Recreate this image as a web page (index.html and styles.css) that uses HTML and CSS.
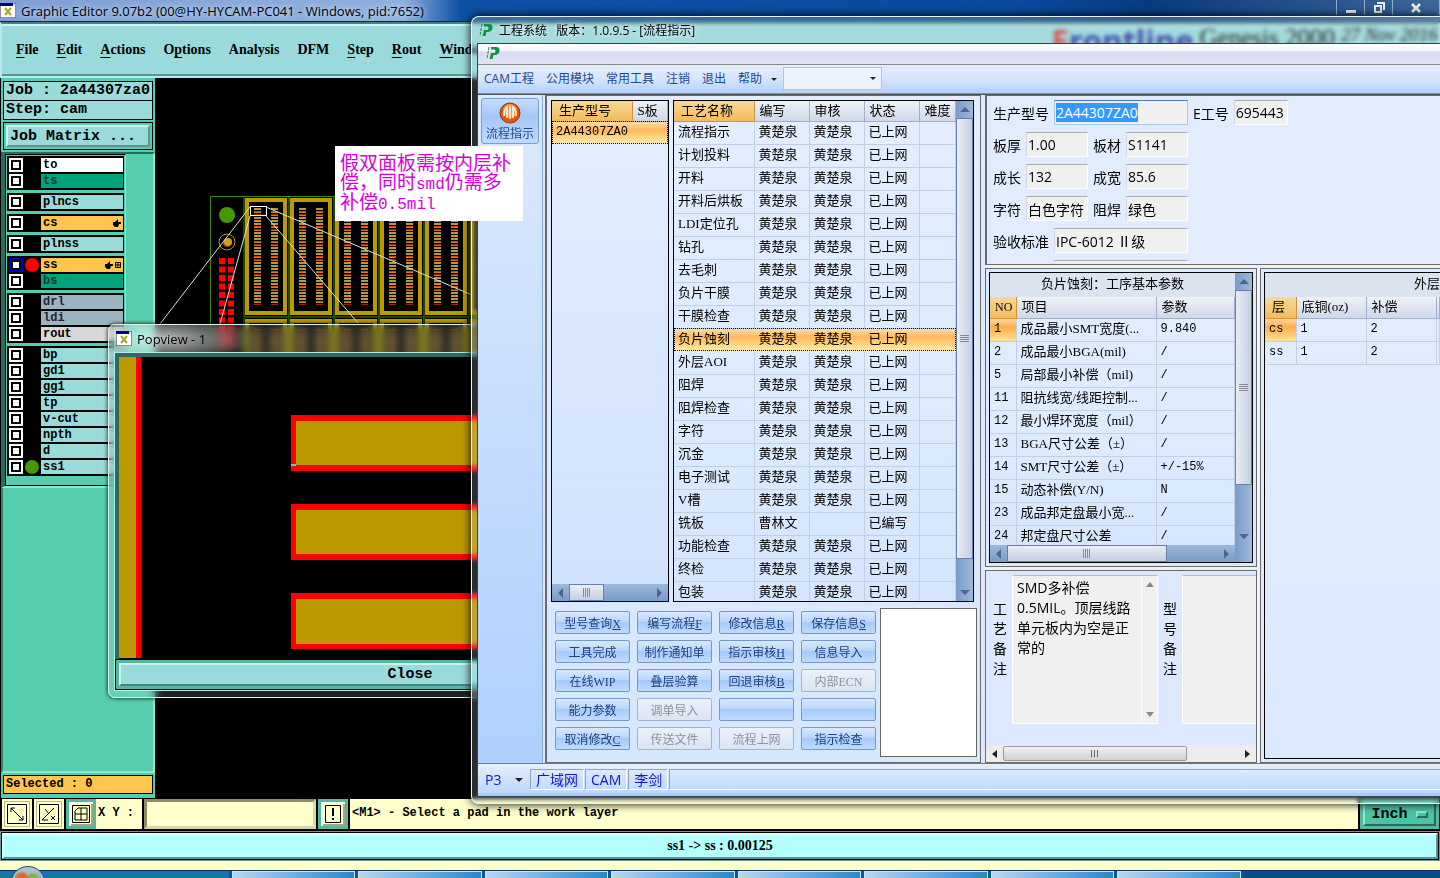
FILE: index.html
```html
<!DOCTYPE html>
<html lang="zh-CN">
<head>
    <meta charset="UTF-8">
    <meta name="viewport" content="width=device-width, initial-scale=1.0">
    <title>工程系统</title>
    <link rel="stylesheet" href="styles.css">
</head>
<body>
    <svg width="0" height="0" class="defs">
        <symbol id="xlogo" viewBox="0 0 16 15">
            <rect x="0" y="0" width="16" height="15" fill="#ddd" stroke="#444"/>
            <rect x="0" y="0" width="13" height="3" fill="#000080"/>
            <rect x="1" y="3" width="14" height="11" fill="#fff"/>
            <path d="M5 5l6 7M11 5l-6 7" stroke="#a8a820" stroke-width="2"/>
        </symbol>
        <symbol id="plogo" viewBox="0 0 14 14">
            <path d="M3 1l-2 12" stroke="#1a8a45" stroke-width="1" stroke-dasharray="3 1"/>
            <path d="M5 1h5q4 0 3.500 4q-.5 4-5 4h-1l-1 4h-3l1.500-6h3q1.500 0 1.500-2t-1.500-1.500h-3z" fill="#0f9246"/>
        </symbol>
    </svg>

    <div class="editor">
        <header class="editor-title">
            <svg width="16" height="15"><use href="#xlogo"/></svg>
            <span>Graphic Editor 9.07b2 (00@HY-HYCAM-PC041 - Windows, pid:7652)</span>
            <div class="win-buttons">
                <button aria-label="minimize"><svg width="12" height="12"><path d="M1 8h10v3h-10z" fill="#eee"/></svg></button>
                <button aria-label="restore"><svg width="12" height="12" fill="none" stroke="#eee" stroke-width="2"><path d="M4 1h7v7"/><rect x="2" y="4" width="6" height="6"/></svg></button>
                <button aria-label="close" class="wide"><svg width="12" height="12" stroke="#eee" stroke-width="2.500"><path d="M2 2l8 8M10 2l-8 8"/></svg></button>
            </div>
        </header>

        <nav class="editor-menu">
            <a href="#"><u>F</u>ile</a>
            <a href="#"><u>E</u>dit</a>
            <a href="#"><u>A</u>ctions</a>
            <a href="#">O<u>p</u>tions</a>
            <a href="#">Analysis</a>
            <a href="#">DFM</a>
            <a href="#"><u>S</u>tep</a>
            <a href="#"><u>R</u>out</a>
            <a href="#"><u>W</u>indows</a>
            <div class="brand">
                <b class="brand-name"><i>F</i>rontline</b>
                <span class="brand-product">Genesis 2000</span>
                <em>27 Nov 2016</em>
            </div>
        </nav>

        <main class="editor-main">
            <aside class="side">
                <div class="job">
                    <div class="field">Job : 2a44307za0</div>
                    <div class="field">Step: cam</div>
                </div>
                <div class="matrix"><button>Job Matrix ...</button></div>
                <div class="layers">
                    <div class="layer-list">
                        <div class="group">
                            <label class="layer"><input type="checkbox"><i></i><span class="white">to</span></label>
                            <label class="layer"><input type="checkbox"><i></i><span class="green">ts</span></label>
                        </div>
                        <div class="group">
                            <label class="layer"><input type="checkbox"><i></i><span>plncs</span></label>
                        </div>
                        <div class="group">
                            <label class="layer"><input type="checkbox"><i></i><span class="orange">cs<svg width="8" height="8"><path d="M0 3h2l3-3v3h3v2h-2l-1 3h-3l-2-2z"/></svg></span></label>
                        </div>
                        <div class="group">
                            <label class="layer"><input type="checkbox"><i></i><span>plnss</span></label>
                        </div>
                        <div class="group">
                            <label class="layer"><input type="checkbox" class="work"><i class="red"></i><span class="orange">ss<svg width="16" height="8"><path d="M0 3h2l3-3v3h3v2h-2l-1 3h-3l-2-2z"/><path d="M10.500 1.500h5v5h-5zM13 1v6M10 4h6" fill="none" stroke="#000"/></svg></span></label>
                            <label class="layer"><input type="checkbox"><i></i><span class="green">bs</span></label>
                        </div>
                        <div class="group">
                            <label class="layer"><input type="checkbox"><i></i><span class="slate">drl</span></label>
                            <label class="layer"><input type="checkbox"><i></i><span class="slate">ldi</span></label>
                            <label class="layer"><input type="checkbox"><i></i><span class="grey">rout</span></label>
                        </div>
                        <div class="group">
                            <label class="layer"><input type="checkbox"><i></i><span>bp</span></label>
                            <label class="layer"><input type="checkbox"><i></i><span>gd1</span></label>
                            <label class="layer"><input type="checkbox"><i></i><span>gg1</span></label>
                            <label class="layer"><input type="checkbox"><i></i><span>tp</span></label>
                            <label class="layer"><input type="checkbox"><i></i><span>v-cut</span></label>
                            <label class="layer"><input type="checkbox"><i></i><span>npth</span></label>
                            <label class="layer"><input type="checkbox"><i></i><span>d</span></label>
                            <label class="layer"><input type="checkbox"><i class="lime"></i><span>ss1</span></label>
                        </div>
                    </div>
                </div>
                <div class="side-fill"></div>
                <div class="selected"><div>Selected : 0</div></div>
            </aside>
            <div class="board">
                <svg width="900" height="400" viewBox="155 78 900 400">
                    <defs>
                        <pattern id="pads" patternUnits="userSpaceOnUse" x="0" y="208" width="8" height="15">
                            <rect width="8" height="2" fill="#b59a3c"/>
                            <rect y="3" width="8" height="1" fill="#e23a10"/>
                            <rect y="4" width="8" height="1" fill="#c08a20"/>
                            <rect y="6" width="8" height="1" fill="#a01c10"/>
                            <rect y="7" width="8" height="1" fill="#d8701c"/>
                            <rect y="9" width="8" height="2" fill="#b59a3c"/>
                            <rect y="12" width="8" height="2" fill="#b59a3c"/>
                        </pattern>
                        <g id="cell">
                            <path d="M244 197v120h45" fill="none" stroke="#3f8a00"/>
                            <rect x="247" y="200" width="38" height="113" fill="none" stroke="#bb9900" stroke-width="4"/>
                            <path d="M254 208h7v97h-7zM271 208h7v97h-7z" fill="url(#pads)"/>
                        </g>
                        <g id="cells">
                            <use href="#cell"/>
                            <use href="#cell" x="45"/>
                            <use href="#cell" x="90"/>
                            <use href="#cell" x="135"/>
                            <use href="#cell" x="180"/>
                            <use href="#cell" x="225"/>
                        </g>
                    </defs>
                    <path d="M210.500 440V196.500H520" fill="none" stroke="#3f8a00"/>
                    <use href="#cells"/>
                    <use href="#cells" y="121"/>
                    <circle cx="227" cy="215" r="8" fill="#449900"/>
                    <circle cx="227" cy="242" r="8" fill="none" stroke="#bb9900"/>
                    <circle cx="227" cy="243" r="4" fill="#a03010"/>
                    <circle cx="228" cy="242" r="4" fill="#d8a010"/>
                    <path d="M222 258v90M231 258v90" stroke="#f00" stroke-width="6" stroke-dasharray="6 2.500"/>
                    <rect x="250.500" y="206.500" width="16" height="9" fill="none" stroke="#fff"/>
                    <path d="M250 207L160 324M250 216L220 324M266 216L358 323M266 207L472 295" stroke="#ddd" fill="none"/>
                </svg>
            </div>
        </main>

        <div class="command">
            <button class="tool" aria-label="zoom"><svg width="20" height="20" fill="none" stroke="#000"><path d="M.5.5h19v19h-19zM4 4l12 12M4 8v-4h4M16 12v4h-4"/></svg></button>
            <button class="tool" aria-label="angle"><svg width="20" height="20" fill="none" stroke="#000"><path d="M.5.5h19v19h-19zM3 16L15 4M3 16h6M6 5l4 5M12 12l4 4M16 12l-4 4"/></svg></button>
            <button class="tool on" aria-label="grid"><svg width="18" height="18" fill="none" stroke="#000"><path d="M.5.5h17v17h-17zM3 6l3-3h9v12h-12zM3 9h12M9 3v12"/></svg></button>
            <label for="xy">X Y :</label>
            <input id="xy" type="text">
            <button class="tool on" aria-label="alert"><svg width="16" height="18" fill="none" stroke="#000"><path d="M.5.5h15v17h-15z"/><path d="M8 3v8M8 13v2" stroke-width="2"/></svg></button>
            <p>&lt;M1&gt; - Select a pad in the work layer</p>
            <div class="unit"><button>Inch <span></span></button></div>
        </div>
        <div class="message"><p>ss1 -&gt; ss : 0.00125</p></div>
        <div class="gap"></div>
        <footer class="taskbar">
            <div class="start"></div>
            <span></span><span></span><span></span><span></span><span></span><span></span><span></span><span></span><span class="last"></span>
        </footer>
    </div>

    <section class="popview">
        <h2><svg width="16" height="15"><use href="#xlogo"/></svg>Popview - 1</h2>
        <div class="pop-body">
            <div class="pop-canvas">
                <svg width="600" height="301" viewBox="119 357 600 301">
                    <path d="M119 357h17v301h-17z" fill="#bb9900"/>
                    <path d="M136 357h5v301h-5z" fill="#f00"/>
                    <path d="M291 415h400v56h-400zM291 504h400v56h-400zM291 593h400v56h-400z" fill="#f00"/>
                    <path d="M296 421h390v44h-390zM296 510h390v44h-390zM296 599h390v45h-390z" fill="#bb9900"/>
                    <path d="M291 464h5v2h-5z" fill="#4cd0d8"/>
                </svg>
            </div>
            <div class="pop-foot"><button>Close</button></div>
        </div>
    </section>

    <section class="app">
        <header class="app-title">
            <svg width="14" height="14"><use href="#plogo"/></svg>
            <h1>工程系统&nbsp;&nbsp; 版本：1.0.9.5 - [流程指示]</h1>
        </header>
        <div class="app-body">
            <div class="mdi"><svg width="14" height="14"><use href="#plogo"/></svg></div>
            <nav class="app-menu">
                <a href="#">CAM工程</a>
                <a href="#">公用模块</a>
                <a href="#">常用工具</a>
                <a href="#">注销</a>
                <a href="#">退出</a>
                <a href="#">帮助<i class="caret"></i></a>
                <div class="combo"><select aria-label="模块"><option></option></select><i class="caret"></i></div>
            </nav>

            <div class="work-area">
                <aside class="app-side">
                    <button>
                        <svg width="22" height="22">
                            <circle cx="11" cy="11" r="10" fill="#e8590c" stroke="#8d3208"/>
                            <circle cx="11" cy="9" r="7" fill="#f79a4a"/>
                            <path d="M5 14q0-7 3-9v11M11 4v13M14 16V5q3 2 3 9" fill="none" stroke="#fff" stroke-width="1.500"/>
                        </svg>
                        流程指示
                    </button>
                </aside>

                <div class="left-pane">
                    <div class="grids">
                        <div class="grid models">
                            <table>
                                <thead><tr><th class="key">生产型号</th><th>S板</th></tr></thead>
                                <tbody><tr class="current"><td colspan="2" class="lat">2A44307ZA0</td></tr></tbody>
                            </table>
                            <div class="hbar"><i class="left"></i><b></b><span></span><i class="right"></i></div>
                        </div>
                        <div class="grid process">
                            <div class="rows">
                                <table>
                                    <colgroup><col class="c80"><col class="c55"><col class="c55"><col class="c55"><col></colgroup>
                                    <thead><tr><th class="key">工艺名称</th><th>编写</th><th>审核</th><th>状态</th><th>难度</th></tr></thead>
                                    <tbody>
                                        <tr><td>流程指示</td><td>黄楚泉</td><td>黄楚泉</td><td>已上网</td><td></td></tr>
                                        <tr><td>计划投料</td><td>黄楚泉</td><td>黄楚泉</td><td>已上网</td><td></td></tr>
                                        <tr><td>开料</td><td>黄楚泉</td><td>黄楚泉</td><td>已上网</td><td></td></tr>
                                        <tr><td>开料后烘板</td><td>黄楚泉</td><td>黄楚泉</td><td>已上网</td><td></td></tr>
                                        <tr><td>LDI定位孔</td><td>黄楚泉</td><td>黄楚泉</td><td>已上网</td><td></td></tr>
                                        <tr><td>钻孔</td><td>黄楚泉</td><td>黄楚泉</td><td>已上网</td><td></td></tr>
                                        <tr><td>去毛刺</td><td>黄楚泉</td><td>黄楚泉</td><td>已上网</td><td></td></tr>
                                        <tr><td>负片干膜</td><td>黄楚泉</td><td>黄楚泉</td><td>已上网</td><td></td></tr>
                                        <tr><td>干膜检查</td><td>黄楚泉</td><td>黄楚泉</td><td>已上网</td><td></td></tr>
                                        <tr class="current"><td>负片蚀刻</td><td>黄楚泉</td><td>黄楚泉</td><td>已上网</td><td></td></tr>
                                        <tr><td>外层AOI</td><td>黄楚泉</td><td>黄楚泉</td><td>已上网</td><td></td></tr>
                                        <tr><td>阻焊</td><td>黄楚泉</td><td>黄楚泉</td><td>已上网</td><td></td></tr>
                                        <tr><td>阻焊检查</td><td>黄楚泉</td><td>黄楚泉</td><td>已上网</td><td></td></tr>
                                        <tr><td>字符</td><td>黄楚泉</td><td>黄楚泉</td><td>已上网</td><td></td></tr>
                                        <tr><td>沉金</td><td>黄楚泉</td><td>黄楚泉</td><td>已上网</td><td></td></tr>
                                        <tr><td>电子测试</td><td>黄楚泉</td><td>黄楚泉</td><td>已上网</td><td></td></tr>
                                        <tr><td>V槽</td><td>黄楚泉</td><td>黄楚泉</td><td>已上网</td><td></td></tr>
                                        <tr><td>铣板</td><td>曹林文</td><td></td><td>已编写</td><td></td></tr>
                                        <tr><td>功能检查</td><td>黄楚泉</td><td>黄楚泉</td><td>已上网</td><td></td></tr>
                                        <tr><td>终检</td><td>黄楚泉</td><td>黄楚泉</td><td>已上网</td><td></td></tr>
                                        <tr><td>包装</td><td>黄楚泉</td><td>黄楚泉</td><td>已上网</td><td></td></tr>
                                    </tbody>
                                </table>
                            </div>
                            <div class="vbar"><i class="up"></i><b></b><span></span><i class="down"></i></div>
                        </div>
                    </div>
                    <div class="actions">
                        <div class="action-grid">
                            <button>型号查询<u>X</u></button>
                            <button>编写流程<u>F</u></button>
                            <button>修改信息<u>R</u></button>
                            <button>保存信息<u>S</u></button>
                            <button>工具完成</button>
                            <button>制作通知单</button>
                            <button>指示审核<u>H</u></button>
                            <button>信息导入</button>
                            <button>在线WIP</button>
                            <button>叠层验算</button>
                            <button>回退审核<u>B</u></button>
                            <button disabled>内部ECN</button>
                            <button>能力参数</button>
                            <button disabled>调单导入</button>
                            <button aria-label="备用1"></button>
                            <button aria-label="备用2"></button>
                            <button>取消修改<u>C</u></button>
                            <button disabled>传送文件</button>
                            <button disabled>流程上网</button>
                            <button>指示检查</button>
                        </div>
                        <div class="preview"></div>
                    </div>
                </div>

                <div class="right-pane">
                    <form class="info">
                        <div class="line">
                            <label for="model">生产型号</label><input id="model" class="w134" value="2A44307ZA0">
                            <label for="worker">E工号</label><input id="worker" class="w54" value="695443">
                        </div>
                        <div class="line">
                            <label for="thick">板厚</label><input id="thick" value="1.00">
                            <label for="mat">板材</label><input id="mat" value="S1141">
                        </div>
                        <div class="line">
                            <label for="len">成长</label><input id="len" value="132">
                            <label for="wid">成宽</label><input id="wid" value="85.6">
                        </div>
                        <div class="line">
                            <label for="chars">字符</label><input id="chars" value="白色字符">
                            <label for="mask">阻焊</label><input id="mask" value="绿色">
                        </div>
                        <div class="line">
                            <label for="std">验收标准</label><input id="std" class="w134" value="IPC-6012 Ⅱ级">
                        </div>
                        <div class="line last"><input class="w134" aria-label="备注"></div>
                    </form>

                    <div class="details">
                        <div class="detail-left">
                            <div class="box params">
                                <div class="grid">
                                    <div class="param-view">
                                        <div class="param-main">
                                            <div class="rows">
                                                <table>
                                                    <caption>负片蚀刻：工序基本参数</caption>
                                                    <colgroup><col class="c26"><col class="c140"><col></colgroup>
                                                    <thead><tr><th class="key no">NO</th><th>项目</th><th>参数</th></tr></thead>
                                                    <tbody>
                                                        <tr><td class="lat hot">1</td><td>成品最小SMT宽度(...</td><td class="lat">9.840</td></tr>
                                                        <tr><td class="lat">2</td><td>成品最小BGA(mil)</td><td class="lat">/</td></tr>
                                                        <tr><td class="lat">5</td><td>局部最小补偿（mil)</td><td class="lat">/</td></tr>
                                                        <tr><td class="lat">11</td><td>阻抗线宽/线距控制...</td><td class="lat">/</td></tr>
                                                        <tr><td class="lat">12</td><td>最小焊环宽度（mil）</td><td class="lat">/</td></tr>
                                                        <tr><td class="lat">13</td><td>BGA尺寸公差（±）</td><td class="lat">/</td></tr>
                                                        <tr><td class="lat">14</td><td>SMT尺寸公差（±）</td><td class="lat">+/-15%</td></tr>
                                                        <tr><td class="lat">15</td><td>动态补偿(Y/N)</td><td class="lat">N</td></tr>
                                                        <tr><td class="lat">23</td><td>成品邦定盘最小宽...</td><td class="lat">/</td></tr>
                                                        <tr><td class="lat">24</td><td>邦定盘尺寸公差</td><td class="lat">/</td></tr>
                                                    </tbody>
                                                </table>
                                            </div>
                                            <div class="hbar"><i class="left"></i><b></b><span></span><i class="right"></i></div>
                                        </div>
                                        <div class="vbar"><i class="up"></i><b></b><span></span><i class="down"></i><em></em></div>
                                    </div>
                                </div>
                            </div>
                            <div class="box notes">
                                <div class="notes-main">
                                    <label for="n1">工艺备注</label>
                                    <div class="memo"><textarea id="n1">SMD多补偿0.5MIL。顶层线路单元板内为空是正常的</textarea><div class="memo-bar"><i class="up"></i><i class="down"></i></div></div>
                                    <label for="n2">型号备注</label>
                                    <div class="memo"><textarea id="n2"></textarea></div>
                                </div>
                                <div class="sysbar"><i class="left"></i><b></b><span></span><i class="right"></i></div>
                            </div>
                        </div>
                        <div class="box outer">
                            <div class="grid">
                                <table>
                                    <caption>外层</caption>
                                    <colgroup><col class="c31"><col class="c70"><col class="c70"><col></colgroup>
                                    <thead><tr><th class="key">层</th><th>底铜(oz)</th><th>补偿</th><th></th></tr></thead>
                                    <tbody>
                                        <tr><td class="lat hot">cs</td><td class="lat">1</td><td class="lat">2</td><td></td></tr>
                                        <tr><td class="lat">ss</td><td class="lat">1</td><td class="lat">2</td><td></td></tr>
                                    </tbody>
                                </table>
                            </div>
                        </div>
                    </div>
                </div>
            </div>

            <footer class="status">
                <div class="port"><select aria-label="端口"><option>P3</option></select><i class="caret"></i></div>
                <span>广域网</span>
                <span>CAM</span>
                <span>李剑</span>
                <span class="rest"></span>
            </footer>
        </div>
    </section>

    <div class="sticky">假双面板需按内层补<br>偿，同时<span>smd</span>仍需多<br>补偿<span>0.5mil</span></div>

    <script>
        // the model number is ready to be typed over
        document.getElementById("model").select();
    </script>
</body>
</html>
```

FILE: styles.css
```css
* {
    box-sizing: border-box;
}

body {
    margin: 0;
    height: 100vh;
    position: relative;
    overflow: hidden;
    background: #000;
    color: #000;
    font-family: "Open Sans", "Noto Sans CJK SC", sans-serif;
    font-size: 12px;
}

button, input, select, textarea {
    font: inherit;
    color: inherit;
    margin: 0;
    padding: 0;
    border: 0;
    border-radius: 0;
    background: none;
    outline: none;
    appearance: none;
}

a {
    color: inherit;
    text-decoration: none;
}

i {
    font-style: normal;
}

svg {
    display: block;
    flex: none;
}

.defs {
    position: absolute;
}

/* graphic editor */
.editor {
    height: 100%;
    display: flex;
    flex-direction: column;
}

.editor-title {
    height: 22px;
    flex: none;
    display: flex;
    align-items: center;
    gap: 5px;
    background: linear-gradient(90deg, #7f9fd4, #8fb0de 28%, #0c50a4 32%, #0a4a9e 70%, #083a80 80%, #3d6798);
    border-bottom: 1px solid #123;
}

.editor-title span {
    flex: 1;
    font-size: 13px;
    text-shadow: 0 0 6px #fff;
    white-space: nowrap;
}

.win-buttons {
    display: flex;
    height: 15px;
    align-self: flex-start;
}

.win-buttons button {
    width: 28px;
    border-left: 1px solid #8fb0d0;
    display: flex;
    justify-content: center;
    padding-top: 2px;
}

.win-buttons .wide {
    width: 48px;
    border-right: 1px solid #8fb0d0;
}

.editor-menu {
    height: 56px;
    flex: none;
    display: flex;
    align-items: center;
    gap: 18px;
    padding: 0 0 0 14px;
    background: #9bdada;
    border: 2px solid #b8ecec;
    border-top-color: #4a8080;
    box-shadow: inset 0 2px #c9f4f4, inset 0 -2px #5a9494;
    font: bold 14px "Liberation Serif", serif;
}

.editor-menu u {
    text-underline-offset: 3px;
}

.brand {
    margin-left: auto;
    display: flex;
    align-items: flex-start;
    gap: 6px;
    height: 50px;
}

.brand-name {
    font: bold 31px/30px "Open Sans", sans-serif;
    color: #1e2c9c;
}

.brand-name i {
    color: #e03030;
}

.brand-product {
    font-size: 25px;
    font-weight: normal;
    line-height: 25px;
}

.brand em {
    font-size: 19px;
    font-weight: normal;
    line-height: 20px;
}

.editor-main {
    flex: 1;
    display: flex;
    min-height: 0;
    background: #000;
}

.side {
    width: 155px;
    flex: none;
    display: flex;
    flex-direction: column;
    background: #55ceb0;
    border-left: 1px solid #000;
    font: bold 12px "Liberation Mono", monospace;
    overflow: hidden;
}

.job {
    padding: 3px 2px 2px;
    font-size: 15px;
}

.field {
    height: 20px;
    line-height: 18px;
    padding-left: 2px;
    background: #9bdada;
    border: 1px solid #000;
    white-space: nowrap;
}

.field + .field {
    margin-top: -1px;
}

.matrix {
    margin: 0 2px 2px;
    padding: 2px;
    border: 1px solid #000;
    font-size: 15px;
}

.matrix button {
    width: 100%;
    height: 22px;
    padding-left: 2px;
    text-align: left;
    background: #9bdada;
    border: 2px solid #5a9494;
    border-top-color: #c9f4f4;
    border-left-color: #c9f4f4;
}

.layers {
    border-top: 2px solid #2f6a5e;
    border-left: 4px solid #2f6a5e;
    border-right: 2px solid #8ce8d0;
    border-bottom: 2px solid #8ce8d0;
}

.layer-list {
    width: 121px;
    height: 332px;
    padding: 1px;
    border: 1px solid #000;
    border-right-color: #8ce8d0;
    display: flex;
    flex-direction: column;
    gap: 3px;
}

.group {
    background: #000;
    padding: 1px 1px 1px 2px;
}

.layer {
    height: 16px;
    display: flex;
    align-items: center;
}

.layer input {
    width: 14px;
    height: 14px;
    border: 2px solid #fff;
    background: #fff;
    box-shadow: inset 0 0 0 2px #000;
}

.layer .work {
    border-color: #0000c0;
}

.layer i {
    width: 14px;
    height: 14px;
    margin: 0 2px;
    border-radius: 50%;
}

.layer .red {
    background: #f00;
}

.layer .lime {
    background: #449900;
}

.layer span {
    flex: 1;
    height: 14px;
    line-height: 14px;
    padding: 0 2px;
    background: #9bdada;
    display: flex;
    justify-content: space-between;
    align-items: center;
}

.layer .white {
    background: #fff;
}

.layer .green {
    background: #00a47a;
    color: #10382c;
}

.layer .orange {
    background: #ffc54d;
}

.layer .slate {
    background: #9ab4c0;
    color: #223;
}

.layer .grey {
    background: #d8d8d8;
}

.side-fill {
    flex: 1;
    border-left: 2px solid #3a8070;
    border-right: 2px solid #8ce8d0;
    border-bottom: 2px solid #8ce8d0;
}

.selected {
    padding: 2px 2px 4px;
}

.selected div {
    height: 19px;
    line-height: 17px;
    padding-left: 2px;
    background: #ffc54d;
    border: 1px solid #000;
}

.board {
    flex: 1;
    overflow: hidden;
}

.command {
    height: 33px;
    flex: none;
    display: flex;
    gap: 2px;
    padding: 1px 1px 2px 2px;
    background: #000;
    font: bold 12px "Liberation Mono", monospace;
}

.tool {
    width: 30px;
    flex: none;
    display: flex;
    align-items: center;
    justify-content: center;
    background: #ffffcc;
    border: 2px solid #ffffcc;
    box-shadow: inset 0 0 0 1px #b8b890;
}

.tool.on {
    border: 3px solid #55b89c;
    box-shadow: inset 2px 2px #ffffe8, inset -2px -2px #a8a880;
}

.command label {
    width: 46px;
    flex: none;
    line-height: 28px;
    margin-left: -2px;
    padding-left: 2px;
    background: #ffffcc;
    white-space: nowrap;
}

.command input {
    width: 172px;
    flex: none;
    background: #ffffcc;
    border: 3px solid #8c8c68;
    border-right-color: #d8d8ac;
    border-bottom-color: #d8d8ac;
}

.command p {
    flex: 1;
    margin: 0;
    padding-left: 2px;
    line-height: 28px;
    background: #ffffcc;
    white-space: nowrap;
}

.unit {
    width: 79px;
    flex: none;
    padding: 3px;
    background: #55b89c;
}

.unit button {
    width: 100%;
    height: 100%;
    border: 2px solid #2f6a5e;
    border-top-color: #8ce8d0;
    border-left-color: #8ce8d0;
    background: #4bc4a5;
    display: flex;
    align-items: center;
    justify-content: center;
    gap: 8px;
    font-size: 15px;
}

.unit span {
    width: 12px;
    height: 7px;
    border: 2px solid #2f6a5e;
    border-top-color: #8ce8d0;
    border-left-color: #8ce8d0;
}

.message {
    height: 30px;
    flex: none;
    padding: 1px;
    background: #b4ffff;
    border: 1px solid #000;
    outline: 1px solid #6a9a98;
    outline-offset: -1px;
    box-shadow: inset 0 0 0 1px #000;
}

.message p {
    height: 100%;
    margin: 0;
    text-align: center;
    background: #b4ffff;
    border: 2px solid #5a9494;
    border-top-color: #dcffff;
    border-left-color: #dcffff;
    font: bold 14px/22px "Liberation Serif", serif;
}

.gap {
    height: 9px;
    flex: none;
    background: #ffffcc;
}

.taskbar {
    height: 8px;
    flex: none;
    display: flex;
    gap: 3px;
    background: #0b5896;
    border-top: 1px solid #0a3050;
}

.taskbar span {
    flex: 1;
    background: linear-gradient(90deg, #b8d8ec, #2f86c4);
    border: 1px solid #cfe6f4;
    border-bottom: 0;
}

.taskbar .last {
    flex: 1.6;
    background: #0c4a90;
    border-color: #0c4a90;
}

.start {
    width: 229px;
    flex: none;
    position: relative;
    background: #1673ae;
}

/* the round start button rises above the bar */
.start::before {
    content: "";
    position: absolute;
    left: 10px;
    top: -5px;
    width: 34px;
    height: 34px;
    border-radius: 50%;
    border: 1px solid #2a4a68;
    background: radial-gradient(circle at 11px 12px, #e86820 5px, transparent 8px), radial-gradient(circle at 22px 12px, #7cb840 4px, transparent 7px), linear-gradient(#b4c8d4, #4a80a4);
}

/* popview */
.popview {
    position: absolute;
    left: 108px;
    top: 324px;
    width: 604px;
    height: 374px;
    padding: 0 5px 6px;
    border: 1px solid #dff5f0;
    border-radius: 7px;
    background: rgba(210, 225, 225, 0.15);
    backdrop-filter: blur(4px);
    box-shadow: 0 0 4px #000;
    display: flex;
    flex-direction: column;
}

.popview h2 {
    margin: 0;
    height: 27px;
    display: flex;
    align-items: center;
    gap: 5px;
    padding-left: 2px;
    font-size: 13px;
    font-weight: normal;
    background: radial-gradient(ellipse 90px 24px at 50px 14px, rgba(255, 255, 255, 0.7), transparent);
}

.pop-body {
    flex: 1;
    display: flex;
    flex-direction: column;
    border: 1px solid #b8ecec;
    background: #55b89c;
}

.pop-canvas {
    flex: 1;
    overflow: hidden;
    background: #000;
    border: solid #2f6a5e;
    border-width: 4px 0 0 4px;
}

.pop-foot {
    height: 31px;
    padding: 3px;
    border: 1px solid #000;
}

.pop-foot button {
    width: 100%;
    height: 100%;
    background: #9bdada;
    border: 2px solid #4a8484;
    border-top-color: #c9f4f4;
    border-left-color: #c9f4f4;
    font: bold 15px "Liberation Mono", monospace;
}

/* engineering system window */
.app {
    position: absolute;
    left: 471px;
    top: 16px;
    right: 0;
    bottom: 74px;
    padding: 0 0 6px 5px;
    border: 1px solid #e8f4fa;
    border-right: 0;
    border-radius: 8px 0 0 8px;
    background: rgba(200, 225, 235, 0.2);
    backdrop-filter: blur(2px);
    box-shadow: 0 0 10px #000;
    display: flex;
    flex-direction: column;
}

.app-title {
    height: 26px;
    flex: none;
    display: flex;
    align-items: center;
    gap: 6px;
    padding-left: 2px;
}

.app-title h1 {
    margin: 0;
    font-size: 12px;
    font-weight: normal;
    text-shadow: 0 0 6px #fff;
}

.app-body {
    flex: 1;
    min-height: 0;
    display: flex;
    flex-direction: column;
    border: 1px solid #345;
    border-right: 0;
    background: #dde9fc;
}

.mdi {
    height: 21px;
    flex: none;
    padding: 2px 8px;
    background: linear-gradient(#fff, #f2f4fb 35%, #d5dcee 40%, #dfe3f3);
    border-bottom: 1px solid #888;
}

.app-menu {
    height: 29px;
    flex: none;
    display: flex;
    align-items: center;
    gap: 12px;
    padding: 0 6px 2px;
    color: #1e4a8c;
    background: linear-gradient(#e3edfd, #d6e5fc 50%, #b5d1fb);
    border-bottom: 1px solid #6f95cc;
}

.caret {
    display: inline-block;
    border: solid transparent;
    border-width: 3px 3px 0;
    border-top-color: #222;
    pointer-events: none;
}

.app-menu .caret {
    margin-left: 9px;
    vertical-align: middle;
}

.combo {
    width: 99px;
    height: 23px;
    margin-left: -6px;
    padding-right: 5px;
    display: flex;
    align-items: center;
    background: #edf3fd;
    border: 1px solid #aac4ea;
}

.combo select {
    flex: 1;
}

.work-area {
    flex: 1;
    min-height: 0;
    display: flex;
    border-top: 1px solid #555;
    border-bottom: 1px solid #777;
}

.app-side {
    width: 65px;
    flex: none;
    padding: 3px;
    background: linear-gradient(#dce9fd, #c6dcfd 50%, #afd0fe);
    border-right: 1px solid #86abe0;
}

.app-side button {
    width: 58px;
    height: 46px;
    display: flex;
    flex-direction: column;
    align-items: center;
    color: #1e4a8c;
    line-height: 20px;
    padding-top: 3px;
    background: linear-gradient(#c6dcfb, #a5c6f6 40%, #c0daff);
    border: 1px solid #7a9cd4;
    border-radius: 3px;
}

.left-pane {
    width: 436px;
    flex: none;
    margin-left: 2px;
    padding: 4px 3px 5px 4px;
    display: flex;
    flex-direction: column;
    gap: 6px;
    background: linear-gradient(#e2edfe, #d6e6fd);
    border: 2px solid #6a6a6a;
    border-width: 1px 1px 1px 2px;
}

.grids {
    flex: 1;
    min-height: 0;
    display: flex;
    gap: 4px;
}

.grid {
    border: 1px solid #000;
    background: linear-gradient(#e3edfe, #dcebff 60%, #d4e5fd);
    overflow: hidden;
    font-family: "Liberation Serif", "Noto Sans CJK SC", serif;
    font-size: 13px;
}

.models {
    width: 118px;
    flex: none;
    display: flex;
    flex-direction: column;
    justify-content: space-between;
    background: linear-gradient(#e3edfe, #cfe2fd);
}

.process {
    width: 301px;
    flex: none;
    display: flex;
}

.rows {
    flex: 1;
    overflow: hidden;
}

table {
    width: 100%;
    border-collapse: collapse;
    table-layout: fixed;
    line-height: 18px;
}

.c26 { width: 26px; }
.c31 { width: 31px; }
.c55 { width: 55px; }
.c70 { width: 70px; }
.c80 { width: 80px; }
.c140 { width: 140px; }

caption {
    height: 24px;
    line-height: 22px;
    background: #dbe3f0;
}

th {
    height: 20px;
    padding: 0 5px;
    font-weight: normal;
    text-align: left;
    white-space: nowrap;
    background: linear-gradient(#eef1f8, #cfd8e8);
    border-right: 1px solid #a0b0cc;
    border-bottom: 1px solid #a0b0cc;
}

.box th {
    height: 21px;
}

th.key {
    padding-left: 7px;
    background: linear-gradient(#f9d79a, #f3bb5a);
    border-color: #d8923c;
}

th.no {
    padding-left: 5px;
    font-size: 12px;
}

td {
    height: 23px;
    padding: 0 4px 2px;
    white-space: nowrap;
    border-right: 1px solid #c3d0e4;
    border-bottom: 1px solid #c3d0e4;
}

/* codes and numbers */
.lat {
    font-family: "Liberation Mono", monospace;
    font-size: 12px;
}

.models th.key {
    width: 80px;
}

.current {
    background: linear-gradient(#fde0ae, #ffb85c 40%, #ffd989 75%, #ffeab0);
    outline: 1px dotted #000;
    outline-offset: -1px;
}

.current td {
    border-color: transparent;
}

.hot {
    background: linear-gradient(#fdd9a0, #ffae4c 40%, #ffe08f);
}

/* scroll bars */
.vbar, .hbar {
    flex: none;
    display: flex;
    align-items: center;
    background: #86a6d0;
}

.vbar {
    width: 17px;
    flex-direction: column;
    background: linear-gradient(90deg, #7a9bc8, #9cb8dc);
}

.hbar {
    height: 17px;
    background: linear-gradient(#9cb8dc, #7a9bc8);
}

.vbar b, .hbar b {
    background: repeating-linear-gradient(90deg, #889 0 1px, transparent 1px 2px) center / 8px 9px no-repeat, linear-gradient(#eaeef4, #c3cee0);
    border: 1px solid #667fae;
}

.vbar b {
    width: 100%;
    background: repeating-linear-gradient(#889 0 1px, transparent 1px 2px) center / 9px 8px no-repeat, linear-gradient(90deg, #eaeef4, #c3cee0);
}

.hbar b {
    height: 100%;
}

.vbar span, .hbar span, .sysbar span {
    flex: 1;
}

.up, .down, .left, .right {
    flex: none;
    border: 5px solid transparent;
    color: #4a6690;
}

.up { border-bottom-color: currentColor; border-top-width: 0; margin: 6px 0; }
.down { border-top-color: currentColor; border-bottom-width: 0; margin: 6px 0; }
.left { border-right-color: currentColor; border-left-width: 0; margin: 0 6px; }
.right { border-left-color: currentColor; border-right-width: 0; margin: 0 6px; }

.models .hbar b {
    width: 35px;
}

.process .vbar b {
    flex: 1;
}

.process .vbar span {
    flex: none;
    height: 25px;
}

/* buttons under the grids */
.actions {
    flex: none;
    display: flex;
    justify-content: space-between;
}

.action-grid {
    display: grid;
    grid-template-columns: repeat(4, 75px);
    grid-auto-rows: 23px;
    gap: 6px 7px;
    padding: 3px 4px;
}

.action-grid button {
    color: #1c3f80;
    font-family: "Liberation Serif", "Noto Sans CJK SC", serif;
    background: linear-gradient(#d8e8fd, #bcd6fb 45%, #a6c9fb 50%, #bfdbff);
    border: 1px solid #7797c8;
    border-radius: 2px;
}

.action-grid button:disabled {
    color: #8c929c;
    background: linear-gradient(#eaf1fb, #dae4f2);
    border-color: #9db4d6;
}

.preview {
    width: 97px;
    height: 149px;
    background: #fff;
    border: 1px solid #666;
}

/* right side */
.right-pane {
    flex: 1;
    min-width: 0;
    margin-left: 4px;
    display: flex;
    flex-direction: column;
    gap: 3px;
    background: #eef0f6;
}

.info {
    height: 170px;
    flex: none;
    overflow: hidden;
    padding: 4px 6px;
    display: flex;
    flex-direction: column;
    gap: 7px;
    background: #e1edfe;
    border: solid #6a6a6a;
    border-width: 1px 0 1px 2px;
    font-size: 14px;
}

.line {
    height: 25px;
    flex: none;
    display: flex;
    align-items: center;
    gap: 5px;
}

.line.last {
    padding-left: 61px;
}

.line input {
    width: 62px;
    height: 25px;
    padding-left: 1px;
    background: #f0f0f0;
    border: 1px solid #fff;
    border-top-color: #a8acb4;
    border-left-color: #d4d8e0;
}

.line .w134 {
    width: 134px;
}

.line .w54 {
    width: 54px;
}

.line input::selection {
    background: #3399ff;
    color: #fff;
}

.line input:focus {
    border-color: #a9c9e8;
    border-top-color: #4a7ab8;
}

.details {
    flex: 1;
    min-height: 0;
    display: flex;
    gap: 3px;
}

.detail-left {
    width: 272px;
    flex: none;
    display: flex;
    flex-direction: column;
    gap: 3px;
}

.box {
    border: 1px solid #6a6a6a;
    background: #dbe8fd;
}

.params {
    flex: 1;
    min-height: 0;
    padding: 3px;
    display: flex;
}

.params .grid {
    flex: 1;
}

.param-view {
    height: 100%;
    display: flex;
}

.param-main {
    flex: 1;
    min-width: 0;
    display: flex;
    flex-direction: column;
}

.params .vbar b {
    height: 195px;
}

.params .vbar em {
    height: 17px;
}

.params .hbar b {
    width: 160px;
}

.notes {
    height: 193px;
    flex: none;
    display: flex;
    flex-direction: column;
    overflow: hidden;
    font-size: 14px;
    line-height: 20px;
}

.notes-main {
    flex: 1;
    display: flex;
    padding: 4px 0 0 7px;
    gap: 5px;
}

.notes label {
    width: 14px;
    flex: none;
    padding-top: 24px;
    word-break: break-all;
}

.memo {
    width: 146px;
    height: 149px;
    flex: none;
    display: flex;
    background: #f0f0f0;
    border: 1px solid #fff;
    border-top-color: #b8bcc4;
}

.memo textarea {
    flex: 1;
    min-width: 0;
    padding: 2px 0 0 4px;
    resize: none;
    overflow: hidden;
}

.memo-bar {
    width: 16px;
    display: flex;
    flex-direction: column;
    align-items: center;
    justify-content: space-between;
    border-left: 1px solid #fff;
}

.memo-bar i {
    border-left-width: 4px;
    border-right-width: 4px;
    color: #888;
}

.sysbar {
    height: 17px;
    display: flex;
    align-items: center;
    background: #ececec;
}

.sysbar i {
    border-top-width: 4px;
    border-bottom-width: 4px;
    color: #222;
}

.sysbar b {
    width: 184px;
    height: 15px;
    background: repeating-linear-gradient(90deg, #666 0 1px, transparent 1px 3px) center / 8px 7px no-repeat, linear-gradient(#f2f2f2, #d0d0d4);
    border: 1px solid #999;
    border-radius: 2px;
}

.outer {
    flex: 1;
    min-width: 0;
    padding: 3px 0 3px 3px;
    border-right: 0;
}

.outer .grid {
    height: 100%;
    border-right: 0;
    background: linear-gradient(#e1edfe, #dbe9fe);
}

.outer caption {
    text-align: right;
}

/* status bar */
.status {
    height: 32px;
    flex: none;
    display: flex;
    gap: 1px;
    padding: 5px 0 3px 7px;
    color: #1414d8;
    font-size: 14px;
    background: linear-gradient(#e6effc, #d5e4fb 40%, #bcd8fd);
    border-bottom: 3px solid #aacbf5;
}

.port {
    width: 44px;
    display: flex;
    align-items: center;
    justify-content: space-between;
    padding-right: 6px;
}

.port .caret {
    border-width: 4px 4px 0;
}

.status span {
    padding: 0 5px;
    line-height: 20px;
    border: 1px solid #fff;
    border-top-color: #8fa4c4;
    border-left-color: #8fa4c4;
}

.status .rest {
    flex: 1;
    border-right: 0;
}

/* sticky note */
.sticky {
    position: absolute;
    left: 335px;
    top: 146px;
    padding: 8px 5px;
    width: 188px;
    height: 75px;
    background: #fff;
    color: #d800d8;
    font: 19px/19px "Liberation Serif", "Noto Sans CJK SC", serif;
    white-space: nowrap;
}

.sticky span {
    font: 16px/16px "Liberation Mono", monospace;
}
```
